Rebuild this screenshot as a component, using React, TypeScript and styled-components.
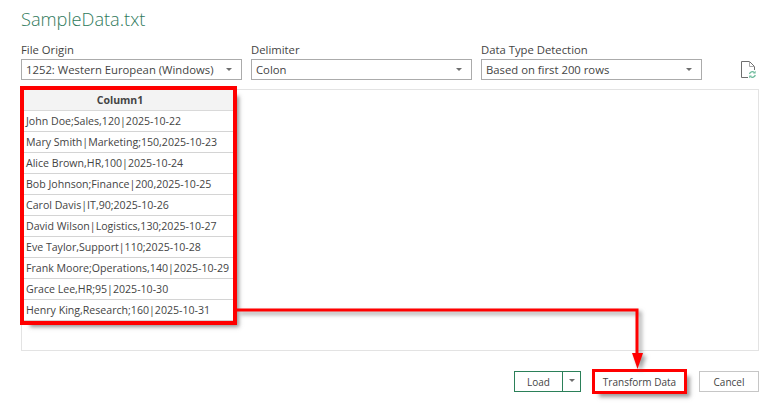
import React from 'react';
import styled, { createGlobalStyle } from 'styled-components';

const GlobalStyle = createGlobalStyle`
    html, body {
        margin: 0;
        padding: 0;
        background: #ffffff;
    }
`;

const Page = styled.div`
    position: relative;
    width: 766px;
    height: 405px;
    box-sizing: border-box;
    padding: 6px 7px 0 21px;
    overflow: hidden;
    background: #ffffff;
    color: #444444;
    font-family: 'Open Sans', 'Noto Sans', sans-serif;
    font-size: 11.3px;
`;

const Title = styled.h1`
    margin: 0;
    height: 32px;
    font-size: 18.2px;
    line-height: 26px;
    font-weight: 300;
    color: #2f7a5c;
`;

const Toolbar = styled.div`
    display: flex;
    gap: 9px;
    height: 42px;
`;

const Field = styled.div`
    display: flex;
    flex: none;
    flex-direction: column;
    width: 221px;
`;

const FieldLabel = styled.label`
    height: 21px;
    line-height: 24px;
    color: #444444;
`;

const Select = styled.div`
    display: flex;
    align-items: center;
    justify-content: space-between;
    height: 21px;
    box-sizing: border-box;
    padding: 1px 9px 0 4px;
    border: 1px solid #ababab;
    line-height: 18px;
    white-space: nowrap;
`;

const Caret = styled.span`
    width: 0;
    height: 0;
    margin-top: -2px;
    border-left: 3px solid transparent;
    border-right: 3px solid transparent;
    border-top: 3px solid #6e6e6e;
`;

const RefreshButton = styled.div`
    display: flex;
    flex: none;
    align-items: flex-start;
    margin: 23px 0 0 30px;
`;

const Preview = styled.div`
    box-sizing: border-box;
    height: 262px;
    margin-top: 9px;
    padding: 0 0 0 2px;
    border: 1px solid #e3e3e3;
`;

const PreviewTable = styled.table`
    width: 209px;
    border-collapse: collapse;
    table-layout: fixed;
    outline: 4px solid #ff0000;
    box-shadow: 6px 6px 4px rgba(90, 90, 90, 0.65);
    background: #ffffff;
`;

const HeaderCell = styled.th`
    height: 20px;
    padding: 0 17px 0 0;
    background: #f3f3f3;
    border-bottom: 1px solid #d9d9d9;
    font-size: 10.5px;
    font-weight: 700;
    color: #444444;
    text-align: center;
`;

const DataCell = styled.td`
    height: 20px;
    padding: 0 0 0 2px;
    border-bottom: 1px solid #d4d4d4;
    font-size: 10.6px;
    color: #444444;
    white-space: nowrap;
`;

const Footer = styled.div`
    display: flex;
    justify-content: flex-end;
    align-items: center;
    height: 21px;
    margin-top: 20px;
`;

const LoadSplit = styled.div`
    display: flex;
    box-sizing: border-box;
    width: 67px;
    height: 21px;
    margin-right: 13px;
    border: 1px solid #2b8059;
`;

const LoadLabel = styled.div`
    flex: 1;
    text-align: center;
    line-height: 21px;
    font-size: 10px;
    color: #444444;
`;

const LoadMenu = styled.div`
    display: flex;
    align-items: center;
    justify-content: center;
    width: 17px;
    border-left: 1px solid #2b8059;
`;

const FooterButton = styled.div<{ $width: number; $marked?: boolean }>`
    box-sizing: border-box;
    width: ${({ $width }) => $width}px;
    height: 21px;
    line-height: 21px;
    font-size: 10px;
    text-align: center;
    color: #444444;
    border: 1px solid ${({ $marked }) => ($marked ? '#ffffff' : '#c6c6c6')};
    ${({ $marked }) =>
        $marked
            ? `
        margin-right: 14px;
        outline: 3px solid #ff0000;
        outline-offset: -1px;
        box-shadow: 5px 5px 4px rgba(90, 90, 90, 0.6);
    `
            : ''}
`;

const Connector = styled.svg`
    position: absolute;
    left: 0;
    top: 0;
    pointer-events: none;
    filter: drop-shadow(3px 3px 2px rgba(90, 90, 90, 0.6));
`;

const rows = [
    'John Doe;Sales,120|2025-10-22',
    'Mary Smith|Marketing;150,2025-10-23',
    'Alice Brown,HR,100|2025-10-24',
    'Bob Johnson;Finance|200,2025-10-25',
    'Carol Davis|IT,90;2025-10-26',
    'David Wilson|Logistics,130;2025-10-27',
    'Eve Taylor,Support|110;2025-10-28',
    'Frank Moore;Operations,140|2025-10-29',
    'Grace Lee,HR;95|2025-10-30',
    'Henry King,Research;160|2025-10-31',
];

const selects = [
    { label: 'File Origin', value: '1252: Western European (Windows)' },
    { label: 'Delimiter', value: 'Colon' },
    { label: 'Data Type Detection', value: 'Based on first 200 rows' },
];

const RefreshIcon = () => (
    <svg width="16" height="18" viewBox="0 0 16 18" fill="none">
        <path d="M7 16.5H0.5V0.5H8.5L13.5 5.5V9" stroke="#6f6f6f" />
        <path d="M8.5 0.5V5.5H13.5" stroke="#a8a8a8" />
        <path d="M8.5 13A3 3 0 0 1 13.3 11.4" stroke="#6dbb9c" strokeWidth="1.3" />
        <path d="M14.6 9.8V12.4H12Z" fill="#6dbb9c" />
        <path d="M14.3 14A3 3 0 0 1 9.5 15.6" stroke="#6dbb9c" strokeWidth="1.3" />
        <path d="M8.2 17.2V14.6H10.8Z" fill="#6dbb9c" />
    </svg>
);

export default function App() {
    return (
        <Page>
            <GlobalStyle />
            <Title>SampleData.txt</Title>
            <Toolbar>
                {selects.map((s) => (
                    <Field key={s.label}>
                        <FieldLabel>{s.label}</FieldLabel>
                        <Select>
                            {s.value}
                            <Caret />
                        </Select>
                    </Field>
                ))}
                <RefreshButton>
                    <RefreshIcon />
                </RefreshButton>
            </Toolbar>
            <Preview>
                <PreviewTable>
                    <thead>
                        <tr>
                            <HeaderCell>Column1</HeaderCell>
                        </tr>
                    </thead>
                    <tbody>
                        {rows.map((r) => (
                            <tr key={r}>
                                <DataCell>{r}</DataCell>
                            </tr>
                        ))}
                    </tbody>
                </PreviewTable>
            </Preview>
            <Footer>
                <LoadSplit>
                    <LoadLabel>Load</LoadLabel>
                    <LoadMenu>
                        <Caret />
                    </LoadMenu>
                </LoadSplit>
                <FooterButton $width={91} $marked>
                    Transform Data
                </FooterButton>
                <FooterButton $width={60}>Cancel</FooterButton>
            </Footer>
            <Connector width="766" height="405" viewBox="0 0 766 405" fill="none">
                <path d="M237 310H637V356" stroke="#ff0000" strokeWidth="3" />
                <path d="M632 353H643L637.5 369Z" fill="#ff0000" />
            </Connector>
        </Page>
    );
}
